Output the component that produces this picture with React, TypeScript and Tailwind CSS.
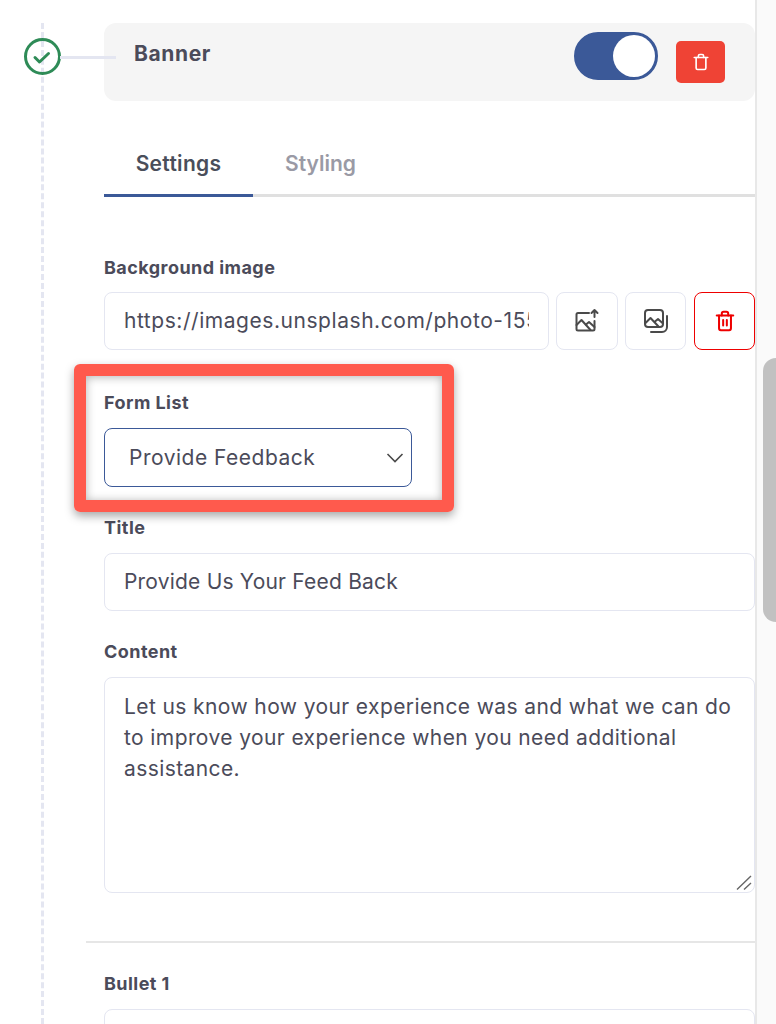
import React from 'react';

const Label = ({ children }: { children: React.ReactNode }) => (
  <label className="block text-[18px] leading-[26px] font-bold tracking-[0.45px] text-[#4b4b5a]">{children}</label>
);

const inputCls =
  'block w-full h-[58px] rounded-lg border border-[#e4e6f1] bg-white px-[19px] pb-[1px] text-[21px] text-[#4b4b5a] outline-none';

const ImageUpIcon = () => (
  <svg width="26" height="26" viewBox="0 0 26 26" fill="none" stroke="#4a4a4a" strokeWidth="2" strokeLinecap="round" strokeLinejoin="round">
    <path d="M15 5H4a1.500 1.500 0 0 0-1.500 1.500V21A1.500 1.500 0 0 0 4 22.500h15a1.500 1.500 0 0 0 1.500-1.500v-8" />
    <path d="M2.500 17l5-5 9 10" />
    <path d="M12 16.500l3-2.500 5.500 5" />
    <path d="M20.500 9V2M17.500 5l3-3 3 3" />
  </svg>
);

const ImagesIcon = () => (
  <svg width="26" height="26" viewBox="0 0 26 26" fill="none" stroke="#4a4a4a" strokeWidth="2" strokeLinecap="round" strokeLinejoin="round">
    <rect x="2" y="2" width="18" height="17" rx="3" />
    <path d="M2.500 15l5-5 8 8.500" />
    <path d="M12 13.500l3-2.500 5 4.500" />
    <path d="M24 8v11a5 5 0 0 1-5 5H8" />
  </svg>
);

const TrashIcon = ({ color, size, bars }: { color: string; size: number; bars?: boolean }) => (
  <svg width={size} height={size} viewBox="0 0 24 24" fill="none" stroke={color} strokeWidth="2.200" strokeLinecap="round" strokeLinejoin="round">
    <path d="M3 6h18" />
    <path d="M8.500 6V4a2 2 0 0 1 2-2h3a2 2 0 0 1 2 2v2" />
    <path d="M5.500 6v14a2 2 0 0 0 2 2h9a2 2 0 0 0 2-2V6" />
    {bars && <path d="M10 11v6M14 11v6" />}
  </svg>
);

const App: React.FC = () => {
  return (
    <div className="relative flex h-[1024px] w-[776px] overflow-hidden bg-white font-['Inter',sans-serif]">
      {/* timeline */}
      <div className="absolute top-[23px] bottom-0 left-[41px] border-l-[3px] border-dashed border-[#e4e6f1]" />
      <div className="absolute top-[38px] left-[24px] flex h-[37px] w-[37px] items-center justify-center rounded-full border-[3.500px] border-[#2e8b57]">
        <svg className="-ml-[2px]" width="20" height="20" viewBox="0 0 20 20" fill="none" stroke="#2e8b57" strokeWidth="3" strokeLinecap="round" strokeLinejoin="round">
          <path d="M3 10.500l4.500 4.500 9-8.500" />
        </svg>
      </div>
      <div className="absolute top-[56px] left-[60px] h-[3px] w-[56px] bg-[#e4e6f1]" />

      <main className="w-[755px] shrink-0 pt-[23px] pl-[104px]">
        {/* banner */}
        <div className="flex h-[78px] rounded-xl bg-[#f5f5f5] pr-[30px] pl-[30px]">
          <span className="mt-[17px] text-[21px] leading-[28px] font-bold tracking-[0.6px] text-[#4b4b5a]">Banner</span>
          <div className="mt-[9px] ml-auto flex h-[48px] w-[84px] items-center justify-end rounded-full border-2 border-[#3b5998] bg-[#3b5998] p-px">
            <div className="h-[42px] w-[42px] rounded-full bg-white" />
          </div>
          <button className="mt-[18px] ml-[18px] flex h-[42px] w-[49px] items-center justify-center rounded-[5px] bg-[#ef4335]">
            <TrashIcon color="#ffffff" size={18} />
          </button>
        </div>

        {/* tabs */}
        <div className="mt-[29px] flex h-[67px] border-b-[3px] border-[#e0e0e0]">
          <div className="-mb-[3px] flex w-[149px] justify-center border-b-[3px] border-[#3b5998] pt-[20px] text-[21px] leading-[28px] font-semibold tracking-[0.3px] text-[#4a4e5a]">
            Settings
          </div>
          <div className="ml-[32px] pt-[20px] text-[21px] leading-[28px] font-semibold text-[#9a9aa5]">Styling</div>
        </div>

        <div className="mt-[58px]">
          <Label>Background image</Label>
          <div className="mt-[11px] flex gap-[7px]">
            <input readOnly value="https://images.unsplash.com/photo-1557804506-669a67965ba0" className={`${inputCls} min-w-0 flex-1 tracking-[0.55px]`} />
            <button className="flex h-[58px] w-[62px] shrink-0 items-center justify-center rounded-lg border border-[#e4e6f1]">
              <ImageUpIcon />
            </button>
            <button className="flex h-[58px] w-[61px] shrink-0 items-center justify-center rounded-lg border border-[#e4e6f1]">
              <ImagesIcon />
            </button>
            <button className="ml-px flex h-[58px] w-[61px] shrink-0 items-center justify-center rounded-lg border border-[#ee0000]">
              <TrashIcon color="#ee0000" size={22} bars />
            </button>
          </div>
        </div>

        <div className="mt-[40px]">
          <Label>Form List</Label>
          <div className="mt-[12px] flex h-[59px] w-[308px] items-center rounded-lg border border-[#3b5998] pr-[7px] pl-[24px]">
            <span className="text-[21px] tracking-[0.5px] text-[#4b4b5a]">Provide Feedback</span>
            <svg className="ml-auto" width="18" height="18" viewBox="0 0 18 18" fill="none" stroke="#4a4a4a" strokeWidth="1.600">
              <path d="M1.500 5l7.500 7.500L16.500 5" />
            </svg>
          </div>
        </div>

        <div className="mt-[28px]">
          <Label>Title</Label>
          <input readOnly value="Provide Us Your Feed Back" className={`${inputCls} mt-[12px] tracking-[0.2px]`} />
        </div>

        <div className="mt-[28px]">
          <Label>Content</Label>
          <div className="relative mt-[12px]">
            <textarea
              readOnly
              value="Let us know how your experience was and what we can do to improve your experience when you need additional assistance."
              className="block h-[216px] w-full resize-none rounded-lg border border-[#e4e6f1] px-[19px] py-[13px] text-[21px] leading-[31px] tracking-[0.4px] text-[#4b4b5a] outline-none"
            />
            {/* resize grip */}
            <svg className="absolute right-[3px] bottom-[3px]" width="16" height="15" viewBox="0 0 16 15" fill="none" stroke="#666666" strokeWidth="1.400">
              <path d="M1 14.500L15 1M8 14.500L15 8" />
            </svg>
          </div>
        </div>

        <div className="mt-[48px] -ml-[18px] border-t-2 border-[#e6e6e6]" />

        <div className="mt-[28px]">
          <Label>Bullet 1</Label>
          <input readOnly className={`${inputCls} mt-[12px]`} />
        </div>
      </main>

      {/* scrollbar */}
      <div className="relative flex-1 border-l-2 border-[#e8e8e8] bg-[#fafafa]">
        <div className="absolute top-[358px] right-0 h-[264px] w-[13px] rounded-l-full bg-[#c1c1c1]" />
      </div>

      {/* highlight */}
      <div className="absolute top-[364px] left-[74px] h-[148px] w-[380px] rounded-[6px] border-[12px] border-[#ff5a4d] shadow-[0_4px_10px_rgba(0,0,0,0.35),inset_0_1px_10px_rgba(0,0,0,0.3)]" />
    </div>
  );
};

export default App;
